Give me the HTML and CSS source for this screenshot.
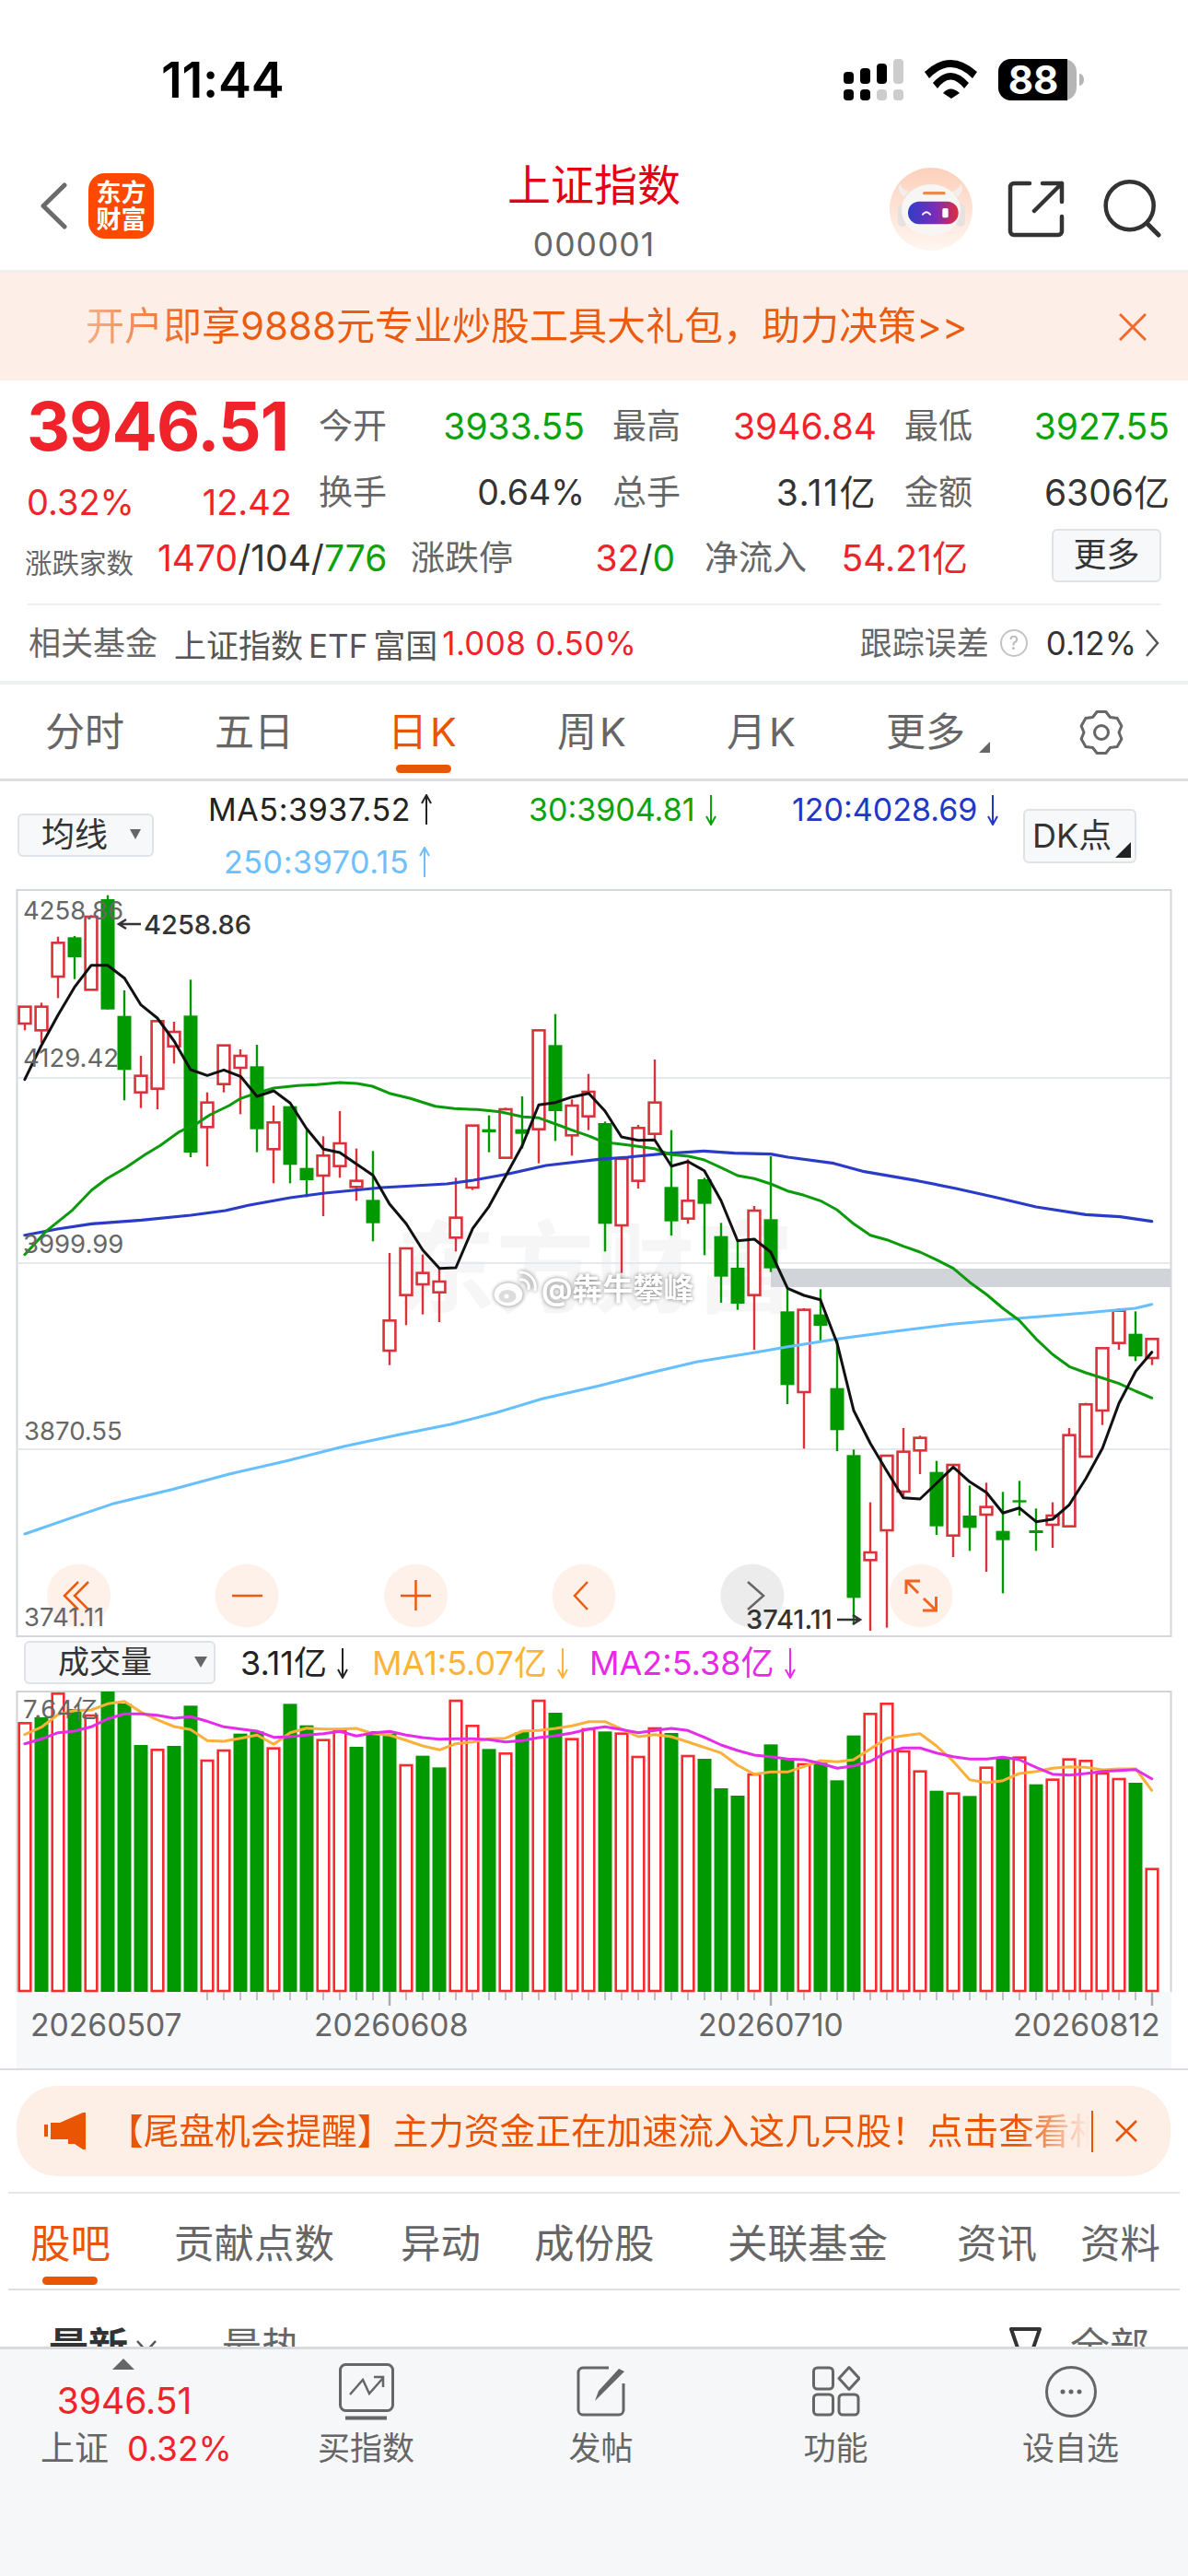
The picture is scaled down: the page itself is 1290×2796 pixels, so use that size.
FILE: index.html
```html
<!DOCTYPE html>
<html lang="zh-CN">
<head>
<meta charset="utf-8">
<title>上证指数</title>
<link rel="stylesheet" href="styles.css">
</head>
<body>
<svg class="defs" width="0" height="0" aria-hidden="true">
  <symbol id="arrow-up" viewBox="0 0 14 34"><path d="M7 33V2M2 10L7 1L12 10" fill="none" stroke="currentColor" stroke-width="2"/></symbol>
  <symbol id="arrow-down" viewBox="0 0 14 34"><path d="M7 1V32M2 24L7 33L12 24" fill="none" stroke="currentColor" stroke-width="2"/></symbol>
</svg>
<div class="page">

  <div class="status">
    <div class="time">11:44</div>
    <svg class="status-icons" viewBox="916 64 262 46" width="262" height="46">
      <g fill="#000">
        <rect x="916" y="78" width="11" height="13" rx="4"/><rect x="934" y="74" width="11" height="17" rx="4"/><rect x="952" y="69" width="11" height="22" rx="4"/>
        <rect x="916" y="97" width="11" height="12" rx="4"/><rect x="934" y="97" width="11" height="12" rx="4"/>
      </g>
      <g fill="#cdcdcd">
        <rect x="970" y="64" width="11" height="27" rx="4"/><rect x="952" y="97" width="11" height="12" rx="4"/><rect x="970" y="97" width="11" height="12" rx="4"/>
      </g>
      <path d="M1004 78Q1032 52 1061 78L1056 85Q1032 61 1009 85ZM1013 90Q1032 68 1052 90L1047 96Q1032 77 1018 96ZM1024 101Q1032 92 1042 101L1033 107Z" fill="#000"/>
      <rect x="1084" y="64" width="85" height="45" rx="14" fill="#b5b5b5"/>
      <path d="M1098 64H1159V109H1098a14 14 0 0 1-14-14V78a14 14 0 0 1 14-14Z" fill="#000"/>
      <path d="M1172 80c3 0 5 3 5 6.500s-2 6.500-5 6.500Z" fill="#b5b5b5"/>
      <text class="batt" x="1122" y="102" text-anchor="middle">88</text>
    </svg>
  </div>

  <header class="topbar">
    <div class="topbar-left">
      <svg class="back" viewBox="0 0 29 51" width="29" height="51"><path d="M26 3L3 25.500L26 48" fill="none" stroke="#6b6b6b" stroke-width="5" stroke-linecap="round" stroke-linejoin="round"/></svg>
      <div class="logo"><span>东方</span><span>财富</span></div>
    </div>
    <div class="title-wrap">
      <div class="title">上证指数</div>
      <div class="code">000001</div>
    </div>
    <div class="topbar-right">
      <svg class="avatar" viewBox="0 0 270 270" width="90" height="90">
        <defs>
          <linearGradient id="av-bg" x1="0" y1="0" x2="0" y2="1"><stop offset="0" stop-color="#fcd0bb"/><stop offset="1" stop-color="#fff6f1"/></linearGradient>
          <linearGradient id="av-visor" x1="0" y1="0" x2="1" y2="0"><stop offset="0" stop-color="#2f3dc9"/><stop offset=".55" stop-color="#7a2cbb"/><stop offset="1" stop-color="#e22c38"/></linearGradient>
        </defs>
        <circle cx="135" cy="135" r="135" fill="url(#av-bg)"/>
        <path d="M45 95C28 80 28 62 34 52C38 70 52 76 64 78ZM222 95C240 80 238 62 232 52C226 70 214 76 202 78Z" fill="#f2eeeb"/>
        <rect x="27" y="118" width="30" height="74" rx="15" fill="#e6e2df"/><rect x="216" y="118" width="30" height="74" rx="15" fill="#e6e2df"/>
        <ellipse cx="135" cy="138" rx="96" ry="84" fill="#f8f6f4"/>
        <rect x="108" y="78" width="74" height="10" rx="5" fill="#ec8a4a"/>
        <rect x="60" y="110" width="164" height="74" rx="36" fill="url(#av-visor)"/>
        <path d="M108 152q12-14 24 0" fill="none" stroke="#fff" stroke-width="6" stroke-linecap="round"/>
        <rect x="172" y="132" width="19" height="31" rx="5" fill="#fff"/>
      </svg>
      <svg class="share" viewBox="1090 192 70 70" width="70" height="70"><path d="M1118 199H1101a4 4 0 0 0-4 4V251a4 4 0 0 0 4 4H1149a4 4 0 0 0 4-4V235M1123 229L1153 199M1132 199H1153V219" fill="none" stroke="#333" stroke-width="4.500" stroke-linecap="round" stroke-linejoin="round"/></svg>
      <svg class="search" viewBox="1195 192 70 70" width="70" height="70"><circle cx="1226.700" cy="223.300" r="26" fill="none" stroke="#333" stroke-width="4.500"/><path d="M1246 243L1258 255" stroke="#333" stroke-width="5" stroke-linecap="round"/></svg>
    </div>
  </header>

  <div class="promo">
    <div class="promo-text">开户即享9888元专业炒股工具大礼包，助力决策&gt;&gt;</div>
    <svg class="promo-x" viewBox="0 0 30 30" width="30" height="30"><path d="M1 1L29 29M29 1L1 29" stroke="#ef6a2c" stroke-width="3"/></svg>
  </div>

  <section class="quote">
    <div class="quote-top">
      <div class="quote-main">
        <div class="price">3946.51</div>
        <div class="price-sub"><span>0.32%</span><span>12.42</span></div>
      </div>
      <div class="stats">
        <div class="stat"><span class="k">今开</span><span class="v green">3933.55</span></div>
        <div class="stat"><span class="k">最高</span><span class="v red">3946.84</span></div>
        <div class="stat"><span class="k">最低</span><span class="v green">3927.55</span></div>
        <div class="stat"><span class="k">换手</span><span class="v pct">0.64%</span></div>
        <div class="stat"><span class="k">总手</span><span class="v loose">3.11亿</span></div>
        <div class="stat"><span class="k">金额</span><span class="v">6306亿</span></div>
      </div>
    </div>
    <div class="quote-third">
      <span class="k small">涨跌家数</span>
      <span class="v"><span class="red">1470</span>/104/<span class="green">776</span></span>
      <span class="k">涨跌停</span>
      <span class="v right"><span class="red">32</span>/<span class="green">0</span></span>
      <span class="k pad">净流入</span>
      <span class="v right red">54.21亿</span>
      <span class="more-btn">更多</span>
    </div>
  </section>

  <div class="fund">
    <span class="k">相关基金</span>
    <span class="fund-name">上证指数<span class="fund-etf">ETF</span>富国</span>
    <span class="red fund-val">1.008 0.50%</span>
    <span class="fund-right">
      <span class="k">跟踪误差</span>
      <span class="q">?</span>
      <span class="fund-err">0.12%</span>
      <svg viewBox="0 0 16 32" width="16" height="32"><path d="M2 2L14 16L2 30" fill="none" stroke="#555" stroke-width="2.500"/></svg>
    </span>
  </div>

  <nav class="tabs">
    <div class="tab">分时</div>
    <div class="tab">五日</div>
    <div class="tab on spaced">日K<i></i></div>
    <div class="tab spaced">周K</div>
    <div class="tab spaced">月K</div>
    <div class="tab more">更多<b></b></div>
    <div class="tab"><svg viewBox="-26 -26 52 52" width="52" height="52"><path d="M4.800-22.500H-4.800L-9.500-16.500L-17.100-15.400L-21.900-7.100L-19 0L-21.900 7.100L-17.100 15.400L-9.500 16.500L-4.800 22.500H4.800L9.500 16.500L17.100 15.400L21.900 7.100L19 0L21.900-7.100L17.100-15.400L9.500-16.500Z" fill="none" stroke="#666" stroke-width="3" stroke-linejoin="round"/><circle r="7.500" fill="none" stroke="#666" stroke-width="3"/></svg></div>
  </nav>

  <div class="ma-row">
    <div class="select ma-select">均线<b></b></div>
    <div class="ma-values">
      <span class="ma dark wide">MA5:3937.52<svg class="arr"><use href="#arrow-up"/></svg></span>
      <span class="ma green">30:3904.81<svg class="arr"><use href="#arrow-down"/></svg></span>
      <span class="ma blue">120:4028.69<svg class="arr"><use href="#arrow-down"/></svg></span>
      <span class="ma sky wide">250:3970.15<svg class="arr"><use href="#arrow-up"/></svg></span>
    </div>
    <div class="select dk">DK点<b></b></div>
  </div>

  <svg class="kline" viewBox="0 965 1290 813" width="1290" height="813">
    <rect x="18.500" y="966" width="1253" height="810" fill="#fff" stroke="#d3d6dc" stroke-width="2"/>
    <text class="wm" x="430" y="1416">东方财富</text>
    <path d="M19 1170H1271M19 1371H1271M19 1573H1271" stroke="#e6e8ef" stroke-width="2"/>
    <rect x="837" y="1377" width="434" height="20" fill="#d1d4d9"/>
    <g id="candles"></g>
    <g id="ma-lines"></g>
    <g>
      <circle cx="85.500" cy="1732" r="34.500" fill="#fdf1ea"/><circle cx="268" cy="1732" r="34.500" fill="#fdf1ea"/><circle cx="451.500" cy="1732" r="34.500" fill="#fdf1ea"/><circle cx="634" cy="1732" r="34.500" fill="#fdf1ea"/>
      <circle cx="817" cy="1732" r="34.500" fill="#ececec"/><circle cx="1000" cy="1732" r="34.500" fill="#fdf1ea"/>
      <path d="M85 1717L70 1732L85 1747M96 1717L81 1732L96 1747M252 1732H285M435 1732H468M451.500 1715V1748M638 1717L624 1732L638 1747" fill="none" stroke="#ec5a0c" stroke-width="2.500"/>
      <path d="M812 1717L829 1732L812 1747" fill="none" stroke="#666" stroke-width="2.500"/>
      <path d="M984 1730V1716H999M984 1716L997 1729M1016.500 1733V1748H1002M1016.500 1748L1003 1735" fill="none" stroke="#f5641e" stroke-width="3"/>
    </g>
    <g class="axis-label">
      <text x="25" y="998">4258.86</text>
      <text x="25" y="1158">4129.42</text>
      <text x="25" y="1360">3999.99</text>
      <text x="26" y="1563">3870.55</text>
      <text x="26" y="1765">3741.11</text>
    </g>
    <g class="extreme">
      <text x="156" y="1014">4258.86</text>
      <text x="810" y="1768">3741.11</text>
      <path d="M153 1003H129M137 998L129 1003L137 1008M909 1758H934M926 1753L934 1758L926 1763" fill="none" stroke="#333" stroke-width="2.500"/>
    </g>
    <g class="weibo">
      <ellipse cx="552" cy="1405" rx="15.500" ry="12.500" fill="#fff"/>
      <ellipse cx="551" cy="1407" rx="9.500" ry="7" fill="#dcdcdc"/>
      <circle cx="550" cy="1407" r="2.500" fill="#fff"/>
      <path d="M565 1381a16 16 0 0 1 16 19M565 1389a8 8 0 0 1 9 10" fill="none" stroke="#fff" stroke-width="3" stroke-linecap="round"/>
      <text x="588" y="1411">@犇牛攀峰</text>
    </g>
  </svg>

  <div class="vol-row">
    <div class="select vol-select">成交量<b></b></div>
    <span class="ma vol dark">3.11亿<svg class="arr"><use href="#arrow-down"/></svg></span>
    <span class="ma vol orange">MA1:5.07亿<svg class="arr"><use href="#arrow-down"/></svg></span>
    <span class="ma vol magenta">MA2:5.38亿<svg class="arr"><use href="#arrow-down"/></svg></span>
  </div>

  <svg class="volume" viewBox="0 1835 1290 410" width="1290" height="410">
    <rect x="18" y="2162" width="1254" height="83" fill="#f7f8fa"/>
    <path d="M18.500 2162V1836H1271.500V2162" fill="#fff" stroke="#d3d3d3" stroke-width="2"/>
    <g id="vol-bars"></g>
    <g id="vol-lines"></g>
    <text class="axis-label vol-top" x="25" y="1865">7.64亿</text>
    <g class="date">
      <text x="33" y="2210">20260507</text>
      <text x="341" y="2210">20260608</text>
      <text x="758" y="2210">20260710</text>
      <text x="1100" y="2210">20260812</text>
    </g>
  </svg>

  <div class="rule"></div>

  <div class="notice">
    <svg class="speaker" viewBox="0 0 45 40" width="45" height="40"><path d="M0 13H4V26H0ZM7 11H17L42 0H45V40H42L33 34H26V29H7Z" fill="#ea5504"/></svg>
    <div class="notice-text">【尾盘机会提醒】主力资金正在加速流入这几只股！点击查看相关个股</div>
    <i class="notice-bar"></i>
    <svg class="notice-x" viewBox="0 0 24 24" width="24" height="24"><path d="M1 1L23 23M23 1L1 23" stroke="#ea5504" stroke-width="2.500"/></svg>
  </div>

  <nav class="tabs2">
    <div class="tab2 on">股吧<i></i></div>
    <div class="tab2">贡献点数</div>
    <div class="tab2">异动</div>
    <div class="tab2">成份股</div>
    <div class="tab2">关联基金</div>
    <div class="tab2">资讯</div>
    <div class="tab2">资料</div>
  </nav>

  <div class="sub">
    <span class="sub-new">最新</span>
    <svg class="sub-chev" viewBox="0 0 22 14" width="22" height="14"><path d="M1 1L11 12L21 1" fill="none" stroke="#555" stroke-width="2.500"/></svg>
    <span class="sub-hot">最热</span>
    <svg class="sub-funnel" viewBox="0 0 37 40" width="37" height="40"><path d="M3 3H34L22 38H15Z" fill="none" stroke="#333" stroke-width="4" stroke-linejoin="round"/></svg>
    <span class="sub-all">全部</span>
  </div>

  <footer class="toolbar">
    <div class="tb-index">
      <i class="tb-tri"></i>
      <div class="tb-price">3946.51</div>
      <div class="tb-line"><span>上证</span><span class="red">0.32%</span></div>
    </div>
    <div class="tb-item">
      <svg viewBox="0 0 60 62" width="60" height="62" fill="none" stroke="#666"><rect x="1.500" y="1.500" width="57" height="50" rx="6" stroke-width="3"/><path d="M7 59.500H52" stroke-width="4"/><path d="M12 34L26 18L33 33L48 16M38 15H48V26" stroke-width="2.500"/></svg>
      <span>买指数</span>
    </div>
    <div class="tb-item">
      <svg viewBox="0 0 56 62" width="56" height="62" fill="none" stroke="#666"><path d="M36 5H8a5 5 0 0 0-5 5V51a5 5 0 0 0 5 5H47a5 5 0 0 0 5-5V22" stroke-width="3"/><path d="M47 6L53 9L29 33L21 41L25 30Z" fill="#666" stroke="none"/></svg>
      <span>发帖</span>
    </div>
    <div class="tb-item">
      <svg viewBox="0 0 52 62" width="52" height="62" fill="none" stroke="#666" stroke-width="3"><rect x="1.500" y="5" width="21" height="23" rx="4"/><path d="M40 4.500L51 16.500L40 28.500L29 16.500Z" stroke-linejoin="round"/><rect x="1.500" y="34" width="21" height="22" rx="4"/><rect x="29" y="34" width="21" height="22" rx="4"/></svg>
      <span>功能</span>
    </div>
    <div class="tb-item">
      <svg viewBox="0 0 60 62" width="60" height="62" fill="none" stroke="#666" stroke-width="3"><circle cx="30" cy="31" r="26.500"/><circle cx="21" cy="31" r="2.500" fill="#666" stroke="none"/><circle cx="30" cy="31" r="2.500" fill="#666" stroke="none"/><circle cx="39" cy="31" r="2.500" fill="#666" stroke="none"/></svg>
      <span>设自选</span>
    </div>
  </footer>
</div>
<script src="chart.js"></script>
</body>
</html>
```

FILE: styles.css
```css
* { box-sizing: border-box; }
html, body { margin: 0; padding: 0; background: #fff; }
body { font-family: Inter, "Noto Sans CJK SC", sans-serif; color: #333; }
.defs { position: absolute; }
.page { width: 1290px; height: 2796px; overflow: hidden; display: flex; flex-direction: column; }

.status { height: 160px; flex: none; display: flex; padding: 61px 112px 0 175px; justify-content: space-between; }
.time { font-size: 54px; line-height: 52px; font-weight: 600; color: #000; letter-spacing: -.3px; }
.status-icons { margin-top: 3px; }
.batt { font: 700 42px Inter, sans-serif; fill: #fff; }

.topbar { height: 136px; flex: none; display: grid; grid-template-columns: 1fr auto 1fr; border-bottom: 3px solid #efeff1; }
.topbar-left { display: flex; padding-left: 44px; align-items: center; gap: 23px; padding-bottom: 6px; }
.logo { width: 71px; height: 71px; border-radius: 18px; background: #ff4800; color: #fff; display: flex; flex-direction: column; align-items: center; justify-content: center; font-size: 27px; line-height: 29px; font-weight: 700; }
.title-wrap { text-align: center; padding-top: 16px; }
.title { font-size: 47px; line-height: 50px; color: #e60012; }
.code { font-size: 35.500px; line-height: 40px; color: #666; margin-top: 20px; letter-spacing: 1px; }
.topbar-right { display: flex; justify-content: flex-end; align-items: flex-start; padding-right: 25px; }
.avatar { margin-top: 22px; margin-right: 34px; }
.share { margin-top: 32px; margin-right: 35px; margin-left: 0; }
.search { margin-top: 32px; }

.promo { height: 117px; flex: none; background: #fdeee7; display: flex; align-items: center; padding: 0 45px 0 93px; justify-content: space-between; }
.promo-text { font-size: 42px; line-height: 50px; background: linear-gradient(90deg, #f5b08a 0, #ec5c10 130px); -webkit-background-clip: text; background-clip: text; color: transparent; padding-bottom: 2px; }

.quote { height: 244px; flex: none; margin: 0 30px 0 0; padding-top: 14px; }
.quote::after { content: ""; display: block; height: 2px; background: #eeeeef; margin: 13px 0 0 30px; }
.quote-top { display: flex; height: 144px; }
.quote-main { width: 346px; flex: none; padding-left: 29px; }
.price { font-size: 73px; line-height: 72px; font-weight: 700; color: #f0232b; letter-spacing: -1px; }
.price-sub { display: flex; justify-content: space-between; width: 288px; font-size: 38px; line-height: 40px; color: #f0232b; margin-top: 26px; }
.stats { display: grid; grid-template-columns: 289px 287px 288px; column-gap: 30px; grid-auto-rows: 72px; align-items: center; }
.stat { display: flex; justify-content: space-between; align-items: center; }
.k { font-size: 37px; line-height: 44px; color: #666; white-space: nowrap; }
.k.small { font-size: 29.500px; }
.v { font-size: 39px; line-height: 44px; color: #333; white-space: nowrap; }
.v.pct { font-size: 37.500px; }
.v.loose { letter-spacing: 1.500px; }
.quote-third { display: grid; grid-template-columns: 144px 275px 113px 174px 143px 175px auto; height: 72px; padding-left: 27px; align-items: center; margin-top: -1px; }
.quote-third .k.pad { padding-left: 32px; font-size: 37px; }
.quote-third .k.small { padding-top: 10px; }
.right { text-align: right; }
.more-btn { margin: 0 0 6px 91px; width: 119px; height: 58px; border: 2px solid #dfe2e6; background: #f7f8fa; border-radius: 6px; font-size: 36px; line-height: 52px; text-align: center; color: #333; }

.fund { height: 86px; flex: none; display: flex; align-items: center; padding: 0 31px; border-bottom: 4px solid #eff0f2; font-size: 35px; white-space: nowrap; }
.fund .k { font-size: 35px; }
.fund-name { color: #555; margin-left: 18px; }
.fund-etf { margin: 0 6px; }
.fund-val { margin-left: 5px; letter-spacing: .3px; }
.fund-right { margin-left: auto; display: flex; align-items: center; }
.q { width: 30px; height: 30px; border: 2px solid #c4c4c4; border-radius: 50%; font-size: 20px; line-height: 26px; text-align: center; color: #b5b5b5; margin: 0 20px 0 12px; }
.fund-err { color: #333; margin-right: 9px; }

.tabs { height: 105px; flex: none; display: grid; grid-template-columns: repeat(7, 184px); border-bottom: 3px solid #dcdce2; padding-top: 26px; }
.tab { position: relative; text-align: center; font-size: 43px; line-height: 50px; color: #666; }
.tab svg { display: block; margin: 0 auto; }
.tab i { display: block; width: 60px; height: 9px; border-radius: 5px; background: #ea5504; margin: 11px auto 0; }
.tab.on { color: #ea5504; }
.tab.spaced { letter-spacing: 3px; }
.tab.more { padding-right: 14px; }
.tab b { position: absolute; left: 143px; top: 36px; width: 0; height: 0; border-left: 12px solid transparent; border-bottom: 12px solid #666; }

.select { position: relative; background: #f7f8fa; border: 2px solid #dfe2e6; border-radius: 6px; color: #333; font-size: 36px; }
.ma-row { height: 117px; flex: none; display: flex; padding-left: 19px; }
.ma-select { width: 148px; height: 47px; margin-top: 35px; line-height: 42px; padding-left: 24px; }
.ma-select b { position: absolute; right: 12px; top: 15px; border-left: 6px solid transparent; border-right: 6px solid transparent; border-top: 11px solid #666; }
.ma-values { width: 885px; margin-left: 59px; margin-top: 2px; display: grid; grid-template-columns: 348px 286px 1fr; grid-auto-rows: 57px; }
.ma { font-size: 34px; line-height: 36px; white-space: nowrap; display: flex; align-items: center; }
.ma.wide { letter-spacing: .6px; }
.ma .arr { width: 14px; height: 34px; margin-left: 10px; }
.ma.sky { padding-left: 17px; }
.dk { width: 123px; height: 59px; margin-top: 30px; margin-left: 0; line-height: 54px; padding-left: 8px; }
.dk b { position: absolute; right: 4px; bottom: 4px; width: 0; height: 0; border-left: 17px solid transparent; border-bottom: 17px solid #222; }

.kline, .volume { display: block; flex: none; }
.wm { font-size: 108px; font-weight: 700; fill: #f6f6f6; }
.axis-label { font-size: 27.500px; fill: #666; }
.extreme text { font-size: 29px; font-weight: 500; fill: #333; }
.weibo { filter: drop-shadow(0 0 2px rgba(0,0,0,.5)); }
.weibo text { font-size: 33px; font-weight: 700; fill: #fff; }

.vol-row { height: 57px; flex: none; display: grid; grid-template-columns: 235px 143px 236px 1fr; align-items: center; padding-left: 26px; }
.vol-select { width: 208px; height: 47px; font-size: 34px; line-height: 42px; padding-left: 35px; margin-top: -4px; }
.vol-select b { position: absolute; right: 7px; top: 15px; border-left: 7px solid transparent; border-right: 7px solid transparent; border-top: 12px solid #666; }
.ma.vol { margin-top: -4px; font-size: 36px; }
.date { font-size: 33.700px; fill: #666; }
.vol-top { font-size: 27.500px; }

.rule { height: 2px; flex: none; background: #dcdce0; }
.notice { height: 98px; flex: none; margin: 17px 19px 17px 18px; background: #fdeee6; border-radius: 44px; display: flex; align-items: center; padding-left: 30px; }
.notice-text { margin-left: 24px; width: 1066px; font-size: 38.700px; line-height: 48px; color: #ea5504; white-space: nowrap; overflow: hidden; -webkit-mask-image: linear-gradient(90deg, #000 989px, transparent 1066px); mask-image: linear-gradient(90deg, #000 989px, transparent 1066px); }
.notice-bar { width: 2px; height: 45px; background: #ea5504; margin-left: 2px; }
.notice-x { margin-left: 24px; }

.tabs2 { flex: none; height: 107px; margin: 0 9px; padding: 29px 0 0 24px; display: grid; grid-template-columns: 156px 246px 145px 210px 249px 134px 82px; border-top: 2px solid #e6e6e8; border-bottom: 2px solid #dfdfe2; }
.tab2 { font-size: 43.500px; line-height: 50px; color: #666; white-space: nowrap; }
.tab2.on { color: #ea5504; }
.tab2 i { display: block; width: 60px; height: 9px; margin: 11px 0 0 13px; border-radius: 5px; background: #ea5504; }

.sub { flex: none; height: 61px; overflow: hidden; display: flex; padding: 36px 0 0 53px; font-size: 43px; line-height: 50px; color: #666; align-items: flex-start; }
.sub-new { font-weight: 700; color: #333; }
.sub-chev { margin: 18px 0 0 9px; }
.sub-hot { margin-left: 71px; }
.sub-funnel { margin: 3px 0 0 768px; }
.sub-all { margin-left: 30px; }

.toolbar { flex: 1; background: #f6f7f9; border-top: 3px solid #d8dadd; display: grid; grid-template-columns: 270px repeat(4, 255px); align-items: start; }
.tb-index { padding-top: 10px; }
.tb-tri { display: block; width: 0; height: 0; border-left: 12px solid transparent; border-right: 12px solid transparent; border-bottom: 12px solid #666; margin-left: 122px; }
.tb-price { font-size: 39px; line-height: 40px; color: #f0232b; text-align: center; margin-top: 14px; }
.tb-line { display: flex; gap: 20px; padding-left: 44px; font-size: 37px; line-height: 40px; color: #666; margin-top: 12px; }
.tb-item { display: flex; flex-direction: column; align-items: center; padding-top: 15px; gap: 10px; font-size: 35px; line-height: 40px; color: #666; }

.red { color: #f0232b; }
.green { color: #0aa30a; }
.blue { color: #2137c5; }
.sky { color: #6cc0ff; }
.dark { color: #222; }
.orange { color: #fbb33a; }
.magenta { color: #ea28e8; }
```

FILE: chart.js
```js
(function () {
  var SP = 18, X0 = 27;
  function cx(i) { return X0 + SP * i; }
  function py(v) { return 960 + v / 3; }
  function vy(v) { return 1780 + v / 3; }

  // type, wick top, body top, body bottom, wick bottom (reading units)
  var K = [
    ['r',398,398,453,475],['r',385,398,475,517],['r',170,190,300,370],['g',168,172,237,308],['r',100,105,343,343],
    ['g',35,48,407,407],['g',345,428,604,703],['r',558,623,677,728],['r',445,445,665,732],['r',447,480,527,583],
    ['g',310,427,873,888],['r',677,710,790,918],['r',522,524,650,677],['r',537,558,597,748],['g',522,592,797,872],
    ['r',720,775,862,973],['g',722,722,913,973],['g',800,923,963,1018],['r',820,883,948,1080],['r',738,843,917,955],
    ['r',860,965,985,1030],['g',868,1027,1103,1162],['r',1200,1420,1518,1565],['r',1185,1185,1337,1435],['r',1205,1265,1302,1400],
    ['r',1250,1293,1328,1425],['r',955,1085,1150,1195],['r',785,785,987,995],['g',752,797,807,872],['r',727,732,890,890],
    ['g',690,797,812,860],['r',475,475,797,908],['g',422,523,738,835],['r',700,720,817,883],['r',617,675,755,800],
    ['g',772,777,1105,1195],['r',890,893,1110,1265],['r',783,793,965,990],['r',570,710,812,830],['g',800,985,1097,1143],
    ['r',895,1030,1088,1105],['g',955,960,1040,1207],['g',1102,1145,1277,1362],['g',1160,1248,1365,1385],['r',1047,1062,1337,1515],
    ['g',885,1090,1250,1262],['g',1315,1390,1630,1692],['r',1380,1385,1653,1837],['g',1318,1400,1437,1492],['g',1480,1640,1777,1845],
    ['g',1840,1858,2323,2410],['r',2012,2175,2200,2430],['r',1860,1860,2103,2420],['r',1770,1847,1977,1997],['r',1795,1802,1843,1920],
    ['g',1877,1913,2090,2118],['r',1887,1890,2120,2190],['g',1957,2055,2095,2170],['r',1948,2027,2052,2238],['g',1978,2105,2135,2308],
    ['g',1942,2005,2012,2055],['g',2032,2103,2112,2170],['r',2012,2055,2085,2160],['r',1770,1793,2090,2090],['r',1688,1693,1863,1863],
    ['r',1507,1510,1713,1760],['r',1380,1388,1493,1515],['g',1390,1463,1537,1552],['r',1478,1480,1542,1565]
  ];

  var html = '';
  K.forEach(function (c, i) {
    var x = cx(i), col = c[0] === 'r' ? '#d9323a' : '#009a00';
    var t = py(c[2]), b = py(c[3]);
    html += '<path d="M' + x + ' ' + py(c[1]) + 'V' + py(c[4]) + '" stroke="' + col + '" stroke-width="2.4"/>';
    if (c[0] === 'r') {
      html += '<rect x="' + (x - 6.4) + '" y="' + t + '" width="12.8" height="' + (b - t) + '" fill="#fff" stroke="' + col + '" stroke-width="2.6"/>';
    } else {
      html += '<rect x="' + (x - 7.5) + '" y="' + t + '" width="15" height="' + (b - t) + '" fill="' + col + '"/>';
    }
  });
  document.getElementById('candles').innerHTML = html;

  function poly(left, right, ymap, col, w) {
    var pts = [], i;
    for (i = 0; i < left.length; i += 2) pts.push((left[i] / 2.412).toFixed(1) + ',' + ymap(left[i + 1]).toFixed(1));
    for (i = 0; i < right.length; i += 2) pts.push((640 + right[i] / 2.412).toFixed(1) + ',' + ymap(right[i + 1]).toFixed(1));
    return '<polyline points="' + pts.join(' ') + '" fill="none" stroke="' + col + '" stroke-width="' + w + '" stroke-linejoin="round" stroke-linecap="round"/>';
  }

  var sky = poly(
    [65,2115,200,2057,300,2015,450,1970,600,1920,750,1877,900,1830,1050,1790,1180,1758,1300,1720,1420,1675,1568,1633],
    [150,1593,280,1555,430,1525,520,1505,650,1480,800,1455,950,1432,1120,1413,1300,1395,1430,1380,1473,1367],
    py, '#66bfff', 3);
  var blue = poly(
    [65,1142,150,1122,240,1105,370,1093,500,1077,590,1062,650,1045,760,1020,850,1005,1000,987,1170,975,1240,963,1330,943,1430,915,1568,895],
    [100,888,190,877,300,868,380,875,475,878,520,888,640,908,720,935,860,965,960,990,1060,1018,1170,1050,1300,1075,1390,1082,1473,1097],
    py, '#2a3bc8', 3.2);
  var grn = poly(
    [65,1205,120,1130,190,1060,240,995,280,958,330,922,380,880,420,850,470,805,520,775,550,750,600,720,630,697,670,680,717,663,780,655,830,652,890,645,935,648,975,657,1020,680,1075,697,1140,722,1190,730,1250,733,1310,740,1370,757,1411,760,1455,780,1498,800,1545,820],
    [20,830,60,842,110,850,170,860,190,870,215,880,260,885,301,897,345,922,388,948,432,958,475,975,519,998,562,1012,605,1030,649,1060,692,1105,736,1142,779,1157,822,1178,866,1197,909,1222,953,1250,996,1295,1040,1335,1083,1380,1126,1420,1170,1480,1213,1530,1257,1570,1300,1590,1344,1607,1387,1625,1431,1650,1473,1672],
    py, '#0a9a0a', 3);
  var blk = poly(
    [65,635,108,525,152,425,195,335,239,263,282,263,326,305,369,392,412,435,456,510,499,603,543,622,586,604,630,625,673,690,717,672,760,712,803,795,847,862,890,873,933,910,977,947,1020,1040,1064,1105,1107,1190,1151,1250,1194,1248,1238,1120,1281,1048,1324,950,1368,850,1411,718,1455,710,1498,692,1542,680],
    [41,738,84,822,128,833,171,832,215,917,258,902,301,932,345,1030,388,1160,432,1155,475,1197,519,1315,562,1338,605,1352,649,1495,692,1712,736,1820,779,1910,822,1997,866,2001,909,1950,953,1897,996,1945,1040,1980,1083,2047,1126,2030,1170,2075,1213,2067,1257,2020,1300,1935,1344,1835,1387,1690,1431,1585,1473,1523],
    py, '#111', 3);
  document.getElementById('ma-lines').innerHTML = sky + blue + grn + blk;

  var V = [
    ['r',268],['g',252],['r',172],['g',225],['r',243],['g',168],['g',207],['g',342],['r',355],['g',345],
    ['g',214],['r',390],['r',357],['g',305],['g',298],['r',350],['g',208],['g',278],['r',323],['r',295],
    ['g',348],['g',297],['g',305],['r',405],['g',377],['g',415],['r',195],['r',277],['g',355],['r',367],
    ['g',300],['r',195],['g',237],['r',320],['r',288],['g',298],['r',302],['r',378],['r',285],['g',303],
    ['r',375],['g',387],['g',483],['g',507],['r',435],['g',340],['g',390],['r',402],['g',400],['g',457],
    ['g',311],['r',238],['r',205],['r',360],['r',425],['g',491],['r',497],['g',508],['r',413],['g',385],
    ['r',380],['g',470],['r',452],['r',386],['r',391],['r',432],['r',450],['g',465],['r',743]
  ];
  var bars = '', bottom = 2162;
  V.forEach(function (b, i) {
    var x = cx(i), t = vy(b[1]);
    if (b[0] === 'r') {
      bars += '<rect x="' + (x - 6.3) + '" y="' + (t + 1) + '" width="12.6" height="' + (bottom - t - 2) + '" fill="#fff" stroke="#f92b30" stroke-width="2.6"/>';
    } else {
      bars += '<rect x="' + (x - 7.5) + '" y="' + t + '" width="15" height="' + (bottom - t) + '" fill="#009a00"/>';
    }
    if (i >= 11) {
      var long = i === 22 || i === 45 || i === 68;
      bars += '<path d="M' + x + ' 2162V' + (long ? 2177 : 2171) + '" stroke="#aaa" stroke-width="' + (long ? 2.4 : 1.4) + '"/>';
    }
  });
  document.getElementById('vol-bars').innerHTML = bars;

  var ma1 = poly(
    [65,308,110,283,152,243,195,230,239,228,282,208,326,200,369,235,412,260,456,282,499,292,543,328,586,330,630,320,673,310,717,340,760,302,803,287,847,290,890,290,933,288,977,305,1020,310,1064,327,1107,345,1151,358,1194,338,1238,332,1281,322,1324,320,1368,297,1411,295,1455,288,1498,280,1542,266],
    [41,266,84,290,128,315,171,308,215,315,258,332,301,350,345,368,388,408,432,437,475,430,519,430,562,412,605,393,649,397,692,390,736,355,779,320,822,312,866,305,909,345,953,395,996,455,1040,465,1083,458,1126,435,1170,428,1213,418,1257,413,1300,415,1344,423,1387,420,1431,420,1473,490],
    vy, '#fbb03b', 3);
  var ma2 = poly(
    [65,338,110,322,152,302,195,297,239,283,282,257,326,241,369,241,412,245,456,255,499,250,543,265,586,283,630,290,673,297,717,317,760,315,803,310,847,305,890,298,933,313,977,303,1020,298,1064,310,1107,318,1151,323,1194,322,1238,322,1281,325,1324,332,1368,328,1411,318,1455,312,1498,303,1542,290],
    [41,283,84,292,128,302,171,295,215,288,258,295,301,317,345,342,388,360,432,375,475,380,519,388,562,390,605,402,649,418,692,410,736,395,779,365,822,352,866,352,909,368,953,380,996,388,1040,388,1083,382,1126,390,1170,415,1213,437,1257,440,1300,435,1344,428,1387,425,1431,422,1473,452],
    vy, '#e32de8', 3);
  document.getElementById('vol-lines').innerHTML = ma1 + ma2;
})();
```
